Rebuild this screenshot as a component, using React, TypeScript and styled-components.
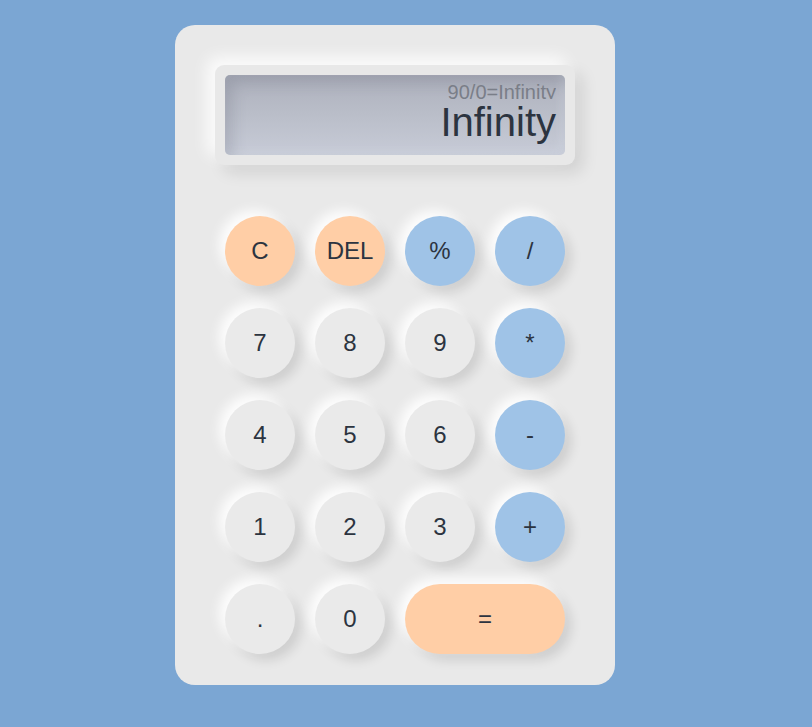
import React from "react";
import styled, { createGlobalStyle } from "styled-components";

const Global = createGlobalStyle`
  html, body { margin: 0; padding: 0; }
  body {
    background: #7ba6d3;
    font-family: "Liberation Sans", Arial, sans-serif;
    min-height: 727px;
  }
`;

const Page = styled.div`
  display: flex;
  align-items: flex-start;
  padding: 25px 0 0 175px;
  min-height: 727px;
  box-sizing: border-box;
`;

const Calculator = styled.div`
  width: 440px;
  height: 660px;
  box-sizing: border-box;
  background: #e9e9e9;
  border-radius: 20px;
  padding: 40px 40px 31px;
  display: flex;
  flex-direction: column;
  gap: 51px;
`;

const DisplayFrame = styled.div`
  width: 360px;
  height: 100px;
  box-sizing: border-box;
  padding: 10px;
  background: #e8e8e8;
  border-radius: 9px;
  box-shadow: -8px -8px 16px rgba(255, 255, 255, 0.85),
    8px 8px 16px rgba(0, 0, 0, 0.1);
`;

const Screen = styled.div`
  height: 80px;
  box-sizing: border-box;
  border-radius: 5px;
  padding: 4px 9px 0 10px;
  background: linear-gradient(180deg, #adb0bc 0%, #babec9 50%, #c7cbd7 100%);
  box-shadow: inset 8px 8px 14px rgba(80, 84, 100, 0.18),
    inset -4px -4px 10px rgba(220, 224, 236, 0.3);
  display: flex;
  flex-direction: column;
  align-items: flex-end;
  overflow: hidden;
`;

const Previous = styled.div`
  height: 20px;
  overflow: hidden;
  font-size: 20px;
  line-height: 27px;
  color: #7a7e88;
  white-space: nowrap;
`;

const Current = styled.div`
  font-size: 40px;
  line-height: 46px;
  color: #2c3440;
  white-space: nowrap;
`;

const Keys = styled.div`
  display: grid;
  grid-template-columns: repeat(4, 70px);
  grid-auto-rows: 70px;
  column-gap: 20px;
  row-gap: 22px;
  padding: 0 10px;
`;

type Tone = "plain" | "orange" | "blue";

const toneBg: Record<Tone, string> = {
  plain: "#eaeaea",
  orange: "#ffcea6",
  blue: "#9fc3e7",
};

const Key = styled.button<{ $tone: Tone; $span?: number }>`
  grid-column: span ${(p) => p.$span ?? 1};
  border: none;
  border-radius: 35px;
  background: ${(p) => toneBg[p.$tone]};
  color: #2c3440;
  font-family: "Liberation Sans", Arial, sans-serif;
  font-size: 24px;
  padding: 0;
  cursor: pointer;
  box-shadow: -6px -6px 12px rgba(255, 255, 255, 0.9),
    6px 6px 12px rgba(0, 0, 0, 0.12);
`;

const keys: { label: string; tone: Tone; span?: number }[] = [
  { label: "C", tone: "orange" },
  { label: "DEL", tone: "orange" },
  { label: "%", tone: "blue" },
  { label: "/", tone: "blue" },
  { label: "7", tone: "plain" },
  { label: "8", tone: "plain" },
  { label: "9", tone: "plain" },
  { label: "*", tone: "blue" },
  { label: "4", tone: "plain" },
  { label: "5", tone: "plain" },
  { label: "6", tone: "plain" },
  { label: "-", tone: "blue" },
  { label: "1", tone: "plain" },
  { label: "2", tone: "plain" },
  { label: "3", tone: "plain" },
  { label: "+", tone: "blue" },
  { label: ".", tone: "plain" },
  { label: "0", tone: "plain" },
  { label: "=", tone: "orange", span: 2 },
];

export default function App() {
  return (
    <Page>
      <Global />
      <Calculator>
        <DisplayFrame>
          <Screen>
            <Previous>90/0=Infinity</Previous>
            <Current>Infinity</Current>
          </Screen>
        </DisplayFrame>
        <Keys>
          {keys.map((k) => (
            <Key key={k.label} $tone={k.tone} $span={k.span}>
              {k.label}
            </Key>
          ))}
        </Keys>
      </Calculator>
    </Page>
  );
}
